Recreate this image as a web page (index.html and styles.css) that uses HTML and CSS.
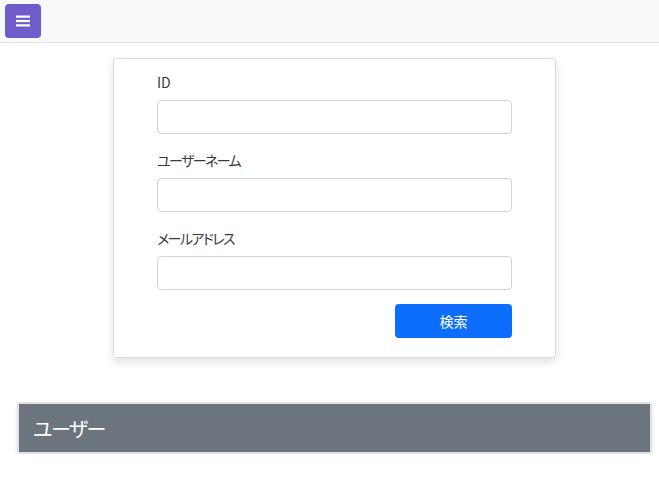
FILE: index.html
```html
<!DOCTYPE html>
<html lang="ja">
<head>
<meta charset="utf-8">
<link rel="stylesheet" href="styles.css">
</head>
<body>
<header class="topbar">
  <button class="menu-btn" aria-label="menu">
    <svg width="14" height="12" viewBox="0 0 14 12"><rect x="0" y="0.5" width="14" height="2.2" fill="#fff"/><rect x="0" y="4.9" width="14" height="2.2" fill="#fff"/><rect x="0" y="9.3" width="14" height="2.2" fill="#fff"/></svg>
  </button>
</header>
<main class="main">
  <div class="card">
    <div class="field">
      <label class="label label-latin">ID</label>
      <input class="input" type="text">
    </div>
    <div class="field">
      <label class="label">ユーザーネーム</label>
      <input class="input" type="text">
    </div>
    <div class="field">
      <label class="label">メールアドレス</label>
      <input class="input" type="text">
    </div>
    <div class="actions">
      <button class="search-btn">検索</button>
    </div>
  </div>
  <div class="section-head">ユーザー</div>
</main>
</body>
</html>
```
FILE: styles.css
```css
html, body {
  margin: 0;
  padding: 0;
  background: #fff;
  font-family: "Noto Sans CJK JP", "Noto Sans", sans-serif;
  font-feature-settings: "palt";
  color: #212529;
}
.topbar {
  height: 42px;
  background: #f8f9fa;
  border-bottom: 1px solid #dee2e6;
  display: flex;
  align-items: center;
  padding-left: 5px;
}
.menu-btn {
  width: 36px;
  height: 34px;
  border: none;
  border-radius: 4px;
  background: #6f5bc9;
  display: flex;
  align-items: center;
  justify-content: center;
  padding: 0;
}
.main {
  padding: 15px 7px 0 17px;
  display: flex;
  flex-direction: column;
}
.card {
  align-self: center;
  width: 443px;
  box-sizing: border-box;
  border: 1px solid #dcdcdc;
  border-radius: 3px;
  box-shadow: 0 4px 10px rgba(0,0,0,0.12);
  padding: 14px 43px 19px 43px;
  display: flex;
  flex-direction: column;
  gap: 17px;
}
.field {
  display: flex;
  flex-direction: column;
}
.label {
  font-size: 14px;
  line-height: 18px;
  margin-bottom: 9px;
  color: #343a40;
  letter-spacing: -1.6px;
}
.label-latin {
  letter-spacing: 0;
}
.input {
  height: 34px;
  box-sizing: border-box;
  border: 1px solid #ced4da;
  border-radius: 4px;
  margin: 0;
  padding: 0 10px;
}
.actions {
  display: flex;
  justify-content: flex-end;
  margin-top: -3px;
}
.search-btn {
  width: 117px;
  height: 34px;
  border: none;
  border-radius: 4px;
  background: #0d6efd;
  color: #fff;
  font-family: inherit;
  font-size: 14px;
}
.section-head {
  margin-top: 44px;
  height: 52px;
  box-sizing: border-box;
  background: #6c757d;
  border: 2px solid #e2e2e2;
  border-radius: 2px;
  box-shadow: 0 2px 4px rgba(0,0,0,0.1);
  color: #fff;
  font-size: 20px;
  letter-spacing: -1.5px;
  display: flex;
  align-items: center;
  padding-left: 14px;
}
```
